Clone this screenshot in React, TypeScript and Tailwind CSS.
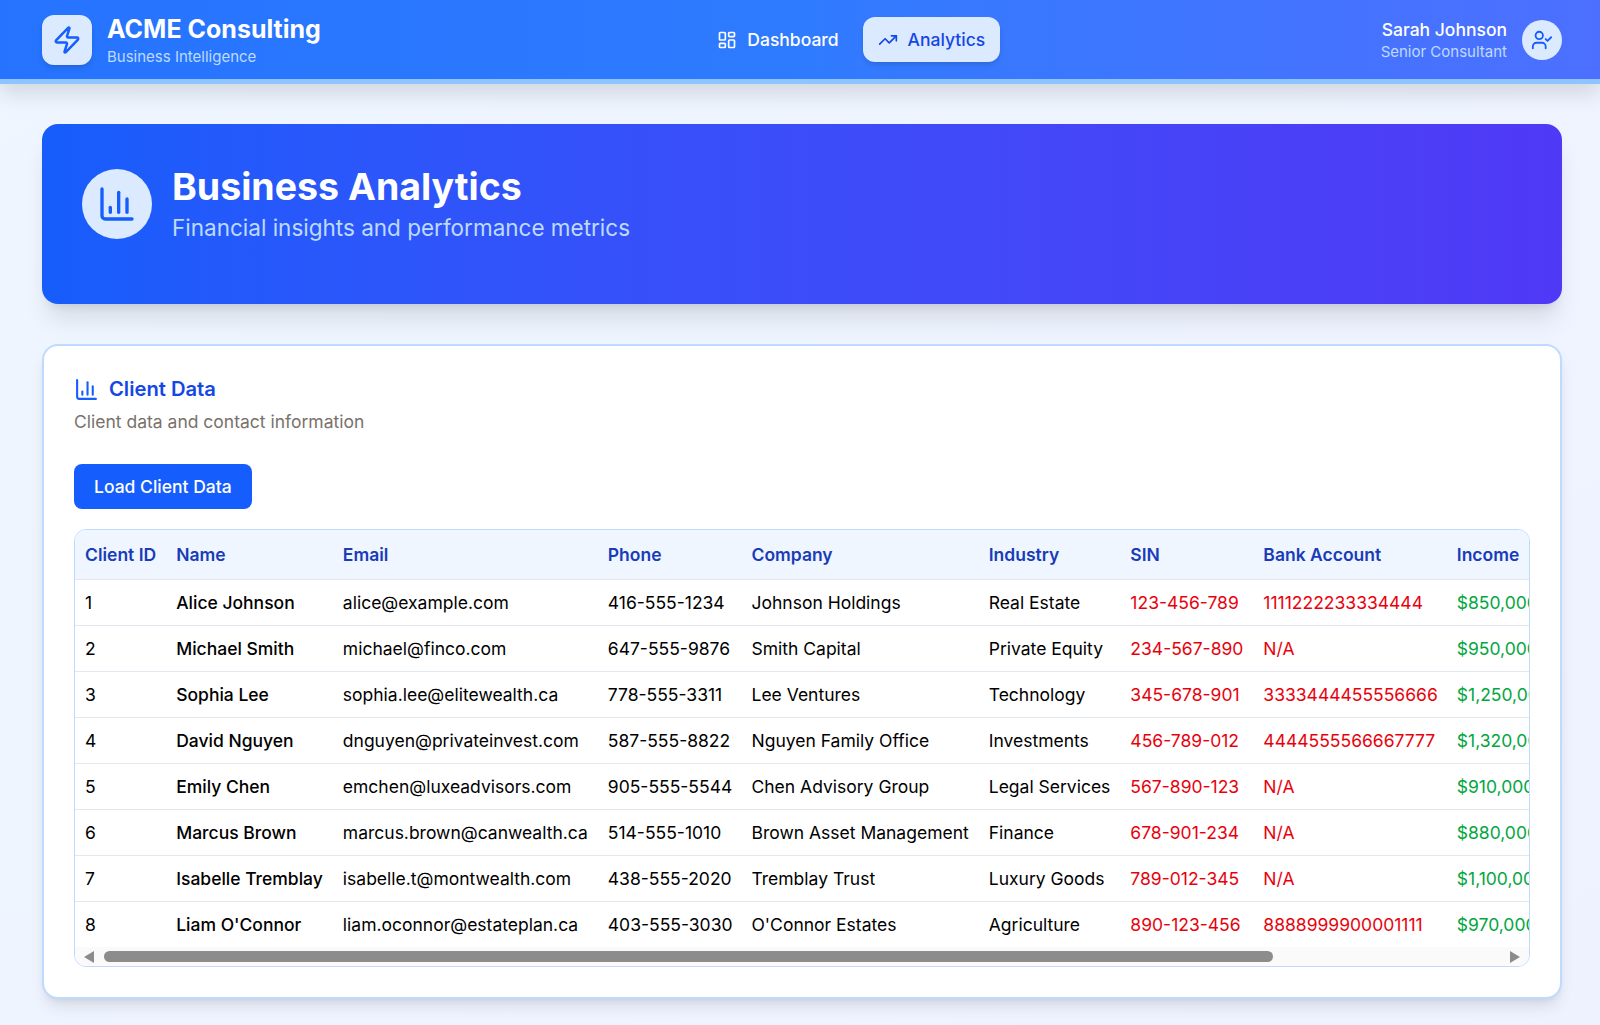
import { BarChart3, LayoutDashboard, TrendingUp, UserCheck, Zap } from 'lucide-react'

const CLIENTS = [
  { id: 1, name: 'Alice Johnson', email: 'alice@example.com', phone: '416-555-1234', company: 'Johnson Holdings', industry: 'Real Estate', sin: '123-456-789', bank: '1111222233334444', income: '$850,000' },
  { id: 2, name: 'Michael Smith', email: 'michael@finco.com', phone: '647-555-9876', company: 'Smith Capital', industry: 'Private Equity', sin: '234-567-890', bank: 'N/A', income: '$950,000' },
  { id: 3, name: 'Sophia Lee', email: 'sophia.lee@elitewealth.ca', phone: '778-555-3311', company: 'Lee Ventures', industry: 'Technology', sin: '345-678-901', bank: '3333444455556666', income: '$1,250,000' },
  { id: 4, name: 'David Nguyen', email: 'dnguyen@privateinvest.com', phone: '587-555-8822', company: 'Nguyen Family Office', industry: 'Investments', sin: '456-789-012', bank: '4444555566667777', income: '$1,320,000' },
  { id: 5, name: 'Emily Chen', email: 'emchen@luxeadvisors.com', phone: '905-555-5544', company: 'Chen Advisory Group', industry: 'Legal Services', sin: '567-890-123', bank: 'N/A', income: '$910,000' },
  { id: 6, name: 'Marcus Brown', email: 'marcus.brown@canwealth.ca', phone: '514-555-1010', company: 'Brown Asset Management', industry: 'Finance', sin: '678-901-234', bank: 'N/A', income: '$880,000' },
  { id: 7, name: 'Isabelle Tremblay', email: 'isabelle.t@montwealth.com', phone: '438-555-2020', company: 'Tremblay Trust', industry: 'Luxury Goods', sin: '789-012-345', bank: 'N/A', income: '$1,100,000' },
  { id: 8, name: "Liam O'Connor", email: 'liam.oconnor@estateplan.ca', phone: '403-555-3030', company: "O'Connor Estates", industry: 'Agriculture', sin: '890-123-456', bank: '8888999900001111', income: '$970,000' },
]

const COLUMNS = ['Client ID', 'Name', 'Email', 'Phone', 'Company', 'Industry', 'SIN', 'Bank Account', 'Income']

export default function App() {
  return (
    <div className="min-h-[1025px] bg-gradient-to-br from-blue-50 to-indigo-50 font-['Inter',sans-serif]">
      <header className="h-[84px] bg-gradient-to-r from-[#2573ff] via-[#2f7bff] to-[#4c6fff] border-b-[5px] border-blue-300 shadow-[0_10px_20px_0_rgba(0,0,0,0.12)]">
        <div className="h-[79px] pl-[42px] pr-[38px] flex items-center justify-between">
          <div className="flex items-center gap-[15px]">
            <div className="w-[50px] h-[50px] rounded-xl bg-blue-100 flex items-center justify-center shadow-md">
              <Zap className="w-[30px] h-[30px] text-blue-600" />
            </div>
            <div>
              <h1 className="text-[25px] leading-[32px] font-bold text-white">ACME Consulting</h1>
              <p className="text-[15px] leading-5 text-blue-200 mt-[2px]">Business Intelligence</p>
            </div>
          </div>
          <nav className="ml-px flex items-center gap-[9px]">
            <a className="flex items-center gap-2.5 px-[15px] h-[45px] text-[17.5px] font-medium text-white">
              <LayoutDashboard className="w-5 h-5" />
              <span className="mt-[2px]">Dashboard</span>
            </a>
            <a className="flex items-center gap-2.5 px-[15px] h-[45px] rounded-xl bg-blue-100 text-[17.5px] font-medium text-blue-700 shadow-md">
              <TrendingUp className="w-5 h-5" />
              <span className="mt-[2px]">Analytics</span>
            </a>
          </nav>
          <div className="flex items-center gap-[15px]">
            <div className="text-right">
              <p className="text-[17.5px] leading-6 font-medium text-white">Sarah Johnson</p>
              <p className="text-[15px] leading-5 text-blue-200">Senior Consultant</p>
            </div>
            <div className="w-10 h-10 rounded-full bg-blue-100 flex items-center justify-center">
              <UserCheck className="w-[22px] h-[22px] text-blue-600" />
            </div>
          </div>
        </div>
      </header>

      <main className="pl-[42px] pr-[38px] pt-10 pb-[27px]">
        <section className="h-[180px] rounded-2xl bg-gradient-to-r from-blue-600 to-indigo-600 shadow-xl px-10 pt-[45px] flex items-start gap-5">
          <div className="w-[70px] h-[70px] rounded-full bg-blue-100 flex items-center justify-center">
            <BarChart3 className="w-10 h-10 text-blue-600" />
          </div>
          <div className="-mt-[2px]">
            <h2 className="text-[37.5px] leading-[40px] font-bold text-white">Business Analytics</h2>
            <p className="text-[22.5px] leading-7 text-blue-200 mt-[7px]">Financial insights and performance metrics</p>
          </div>
        </section>

        <section className="mt-10 rounded-2xl bg-white border-2 border-blue-200 shadow-lg p-[30px]">
          <div className="-mt-px flex items-center gap-2.5">
            <BarChart3 className="w-[25px] h-[25px] text-blue-600" />
            <h3 className="text-[20.2px] leading-7 font-semibold text-blue-700">Client Data</h3>
          </div>
          <p className="mt-[5px] text-[17.5px] leading-7 text-stone-500">Client data and contact information</p>
          <button className="mt-[28px] h-[45px] px-5 pt-[2px] rounded-lg bg-blue-600 text-[17.5px] font-medium text-white">
            Load Client Data
          </button>
          <div className="mt-5 overflow-hidden rounded-xl border border-blue-200">
            <div className="overflow-hidden">
              <table className="border-collapse whitespace-nowrap text-left text-[17.5px] [&_tr>*:nth-child(4)]:pr-[9px] [&_tr>*:nth-child(8)]:pr-[9px]">
                <thead className="bg-blue-50">
                  <tr className="border-b border-slate-200">
                    {COLUMNS.map((col) => (
                      <th key={col} className="h-[49px] px-2.5 pt-[2px] font-semibold text-blue-800">{col}</th>
                    ))}
                  </tr>
                </thead>
                <tbody>
                  {CLIENTS.map((c) => (
                    <tr key={c.id} className="border-b border-slate-200 last:border-b-0">
                      <td className="h-[46px] px-2.5 pt-[2px] text-black">{c.id}</td>
                      <td className="h-[46px] px-2.5 pt-[2px] font-medium text-black">{c.name}</td>
                      <td className="h-[46px] px-2.5 pt-[2px] text-black">{c.email}</td>
                      <td className="h-[46px] px-2.5 pt-[2px] text-black">{c.phone}</td>
                      <td className="h-[46px] px-2.5 pt-[2px] text-black">{c.company}</td>
                      <td className="h-[46px] px-2.5 pt-[2px] text-black">{c.industry}</td>
                      <td className="h-[46px] px-2.5 pt-[2px] text-red-600">{c.sin}</td>
                      <td className="h-[46px] px-2.5 pt-[2px] text-red-600">{c.bank}</td>
                      <td className="h-[46px] px-2.5 pt-[2px] text-green-600">{c.income}</td>
                    </tr>
                  ))}
                </tbody>
              </table>
            </div>
            {/* horizontal scrollbar */}
            <div className="h-[19px] bg-[#fafafa] flex items-center pl-[9px] pr-[9px]">
              <svg className="w-[10px] h-[12px] text-[#8c8c8c]" viewBox="0 0 10 12" fill="currentColor"><path d="M0 6 10 0v12z" /></svg>
              <div className="ml-[10px] w-[1169px] h-[11px] rounded-full bg-[#8c8c8c]" />
              <svg className="ml-auto w-[10px] h-[12px] text-[#8c8c8c]" viewBox="0 0 10 12" fill="currentColor"><path d="M10 6 0 0v12z" /></svg>
            </div>
          </div>
        </section>
      </main>
    </div>
  )
}
